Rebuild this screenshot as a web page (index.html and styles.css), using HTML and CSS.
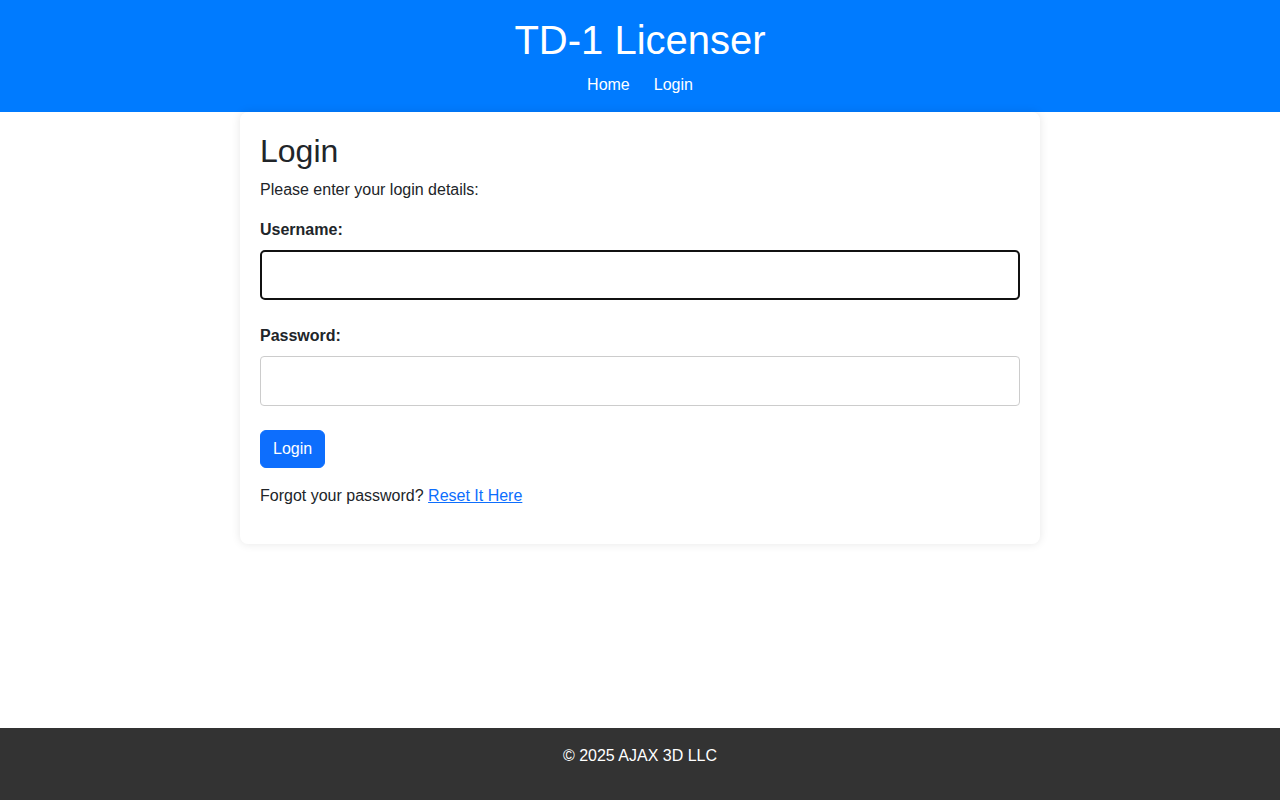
FILE: index.html
```html
<!DOCTYPE html>
<html lang="en">
<head>
    <meta charset="UTF-8">
    <meta name="viewport" content="width=device-width, initial-scale=1.0">
    <title>Login - TD-1 Licenser</title>
    <link rel="stylesheet" href="styles.css">
</head>
<body>
    <div class="page">
        <header class="site-header">
            <h1>TD-1 Licenser</h1>
            <nav class="site-nav">
                <a href="/">Home</a>
                <a href="/login">Login</a>
            </nav>
        </header>

        <main class="content">
            <div class="card">
                <h2>Login</h2>
                <p>Please enter your login details:</p>
                <form id="loginForm">
                    <label for="username">Username:</label>
                    <input type="text" id="username" name="username" class="field field-active" required>
                    <label for="password">Password:</label>
                    <input type="password" id="password" name="password" class="field" required>
                    <button type="submit" class="btn">Login</button>
                </form>
                <p class="forgot">Forgot your password? <a href="/reset-password">Reset It Here</a></p>
            </div>
        </main>

        <footer class="site-footer">
            <p>&copy; 2025 AJAX 3D LLC</p>
        </footer>
    </div>
</body>
</html>
```

FILE: styles.css
```css
* {
    box-sizing: border-box;
}
body {
    margin: 0;
    padding: 0;
    font-family: "Liberation Sans", Arial, sans-serif;
    font-size: 16px;
    line-height: 1.5;
    color: #212529;
    background-color: #fff;
}
.page {
    min-height: 100vh;
    display: flex;
    flex-direction: column;
}
.site-header {
    background-color: #007bff; /* barra azul */
    color: #fff;
    text-align: center;
    padding: 16px 0 15px;
}
.site-header h1 {
    margin: 0 0 9px;
    font-size: 40px;
    font-weight: 400;
    line-height: 48px;
}
.site-nav {
    display: flex;
    justify-content: center;
    gap: 24px;
}
.site-nav a {
    color: #fff;
    text-decoration: none;
}
.content {
    flex: 1;
}
.card {
    width: 800px;
    margin: 0 auto;
    background-color: #fff;
    padding: 20px;
    border-radius: 8px;
    box-shadow: 0px 0px 10px rgba(0, 0, 0, 0.1);
}
.card h2 {
    margin: 0 0 8px;
    font-size: 32px;
    font-weight: 400;
    line-height: 38px;
}
.card p {
    margin: 0 0 16px;
}
.card label {
    display: block;
    font-weight: bold;
    margin-bottom: 8px;
}
.field {
    display: block;
    width: 100%;
    height: 50px;
    padding: 10px;
    margin-bottom: 24px;
    border: 1px solid #ccc;
    border-radius: 4px;
    font: inherit;
}
.field-active {
    border: 2px solid #111;
    border-radius: 5px;
}
.btn {
    display: inline-block;
    padding: 6px 12px;
    border: 1px solid #0d6efd;
    background-color: #0d6efd; /* botão */
    color: #fff;
    font: inherit;
    line-height: 24px;
    border-radius: 6px;
    cursor: pointer;
}
.btn:hover {
    background-color: #0b5ed7;
}
.card .forgot {
    margin-top: 16px;
}
.forgot a {
    color: #0d6efd;
}
.site-footer {
    background-color: #333;
    color: #fff;
    text-align: center;
    padding: 16px 0 32px;
}
.site-footer p {
    margin: 0;
}
```
